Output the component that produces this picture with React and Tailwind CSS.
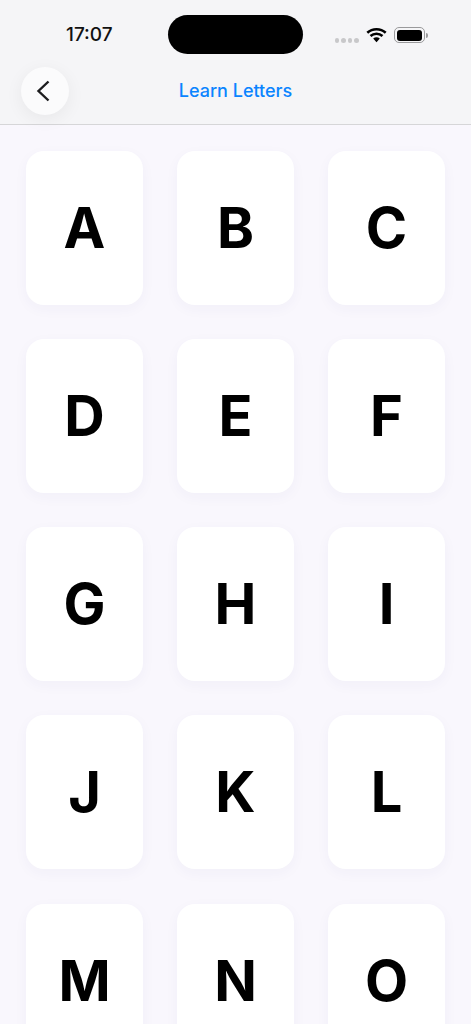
import React from 'react'

const letters = ['A', 'B', 'C', 'D', 'E', 'F', 'G', 'H', 'I', 'J', 'K', 'L', 'M', 'N', 'O']

function StatusBar() {
  return (
    <div className="flex h-[54px] items-start pt-[15px]">
      <div className="w-[168px] pl-[66px] pt-[9px] text-[19px] leading-[22px] font-medium text-[#111111]">17:07</div>
      <div className="h-[39px] w-[134.5px] rounded-[20px] bg-black"></div>
      <div className="flex items-start pl-[32px] pt-[12px]">
        {/* signal dots */}
        <div className="mt-[11px] flex gap-[2px]">
          <span className="h-[4.5px] w-[4.5px] rounded-full bg-[#c8c8ca]"></span>
          <span className="h-[4.5px] w-[4.5px] rounded-full bg-[#c8c8ca]"></span>
          <span className="h-[4.5px] w-[4.5px] rounded-full bg-[#c8c8ca]"></span>
          <span className="h-[4.5px] w-[4.5px] rounded-full bg-[#c8c8ca]"></span>
        </div>
        <svg className="ml-[7px]" width="21" height="16" viewBox="0 0 21 16" fill="none">
          <path d="M1.3 5.8C6.5 1 14.5 1 19.7 5.8" stroke="#000" strokeWidth="2.6" />
          <path d="M4.5 9C8 5.9 13 5.9 16.5 9" stroke="#000" strokeWidth="2.6" />
          <path d="M7.2 11.4C9.1 9.9 11.9 9.9 13.8 11.4L10.5 15.2Z" fill="#000" />
        </svg>
        <div className="ml-[7.5px] flex items-center">
          <div className="h-[16px] w-[30.5px] rounded-[5px] border border-[#9a9a9c] p-[1.5px]">
            <div className="h-full w-full rounded-[3px] bg-black"></div>
          </div>
          <span className="ml-[1px] h-[5px] w-[2px] rounded-r-full bg-[#9a9a9c]"></span>
        </div>
      </div>
    </div>
  )
}

export default function App() {
  return (
    <div className="h-[1024px] overflow-hidden bg-[#f9f7fd] font-['Inter',sans-serif]">
      <header className="h-[125px] border-b border-[#d6d6d8] bg-[#f5f5f7]">
        <StatusBar />
        <div className="relative mt-[13px] flex h-[47px] items-center justify-center">
          <button className="absolute left-[21px] top-0 flex h-[47.5px] w-[47.5px] items-center justify-center rounded-full bg-[#fbfbfc] shadow-[0_4px_18px_rgba(0,0,0,0.06)]">
            <svg className="mr-[3px]" width="14" height="22" viewBox="0 0 14 22" fill="none">
              <path d="M12.5 1.5L2.5 11L12.5 20.5" stroke="#1c1c1e" strokeWidth="2.4" />
            </svg>
          </button>
          <h1 className="text-[18px] leading-[24px] font-medium text-[#0a84ff]">Learn Letters</h1>
        </div>
      </header>

      <main className="grid grid-cols-3 gap-x-[34px] gap-y-[34.3px] px-[26px] pt-[25.5px]">
        {letters.map((letter) => (
          <div
            key={letter}
            className="flex h-[154px] items-center justify-center rounded-[18px] bg-white text-[56px] leading-none font-bold text-black shadow-[0_4px_14px_rgba(60,40,120,0.04)]"
          >
            {letter}
          </div>
        ))}
      </main>
    </div>
  )
}
